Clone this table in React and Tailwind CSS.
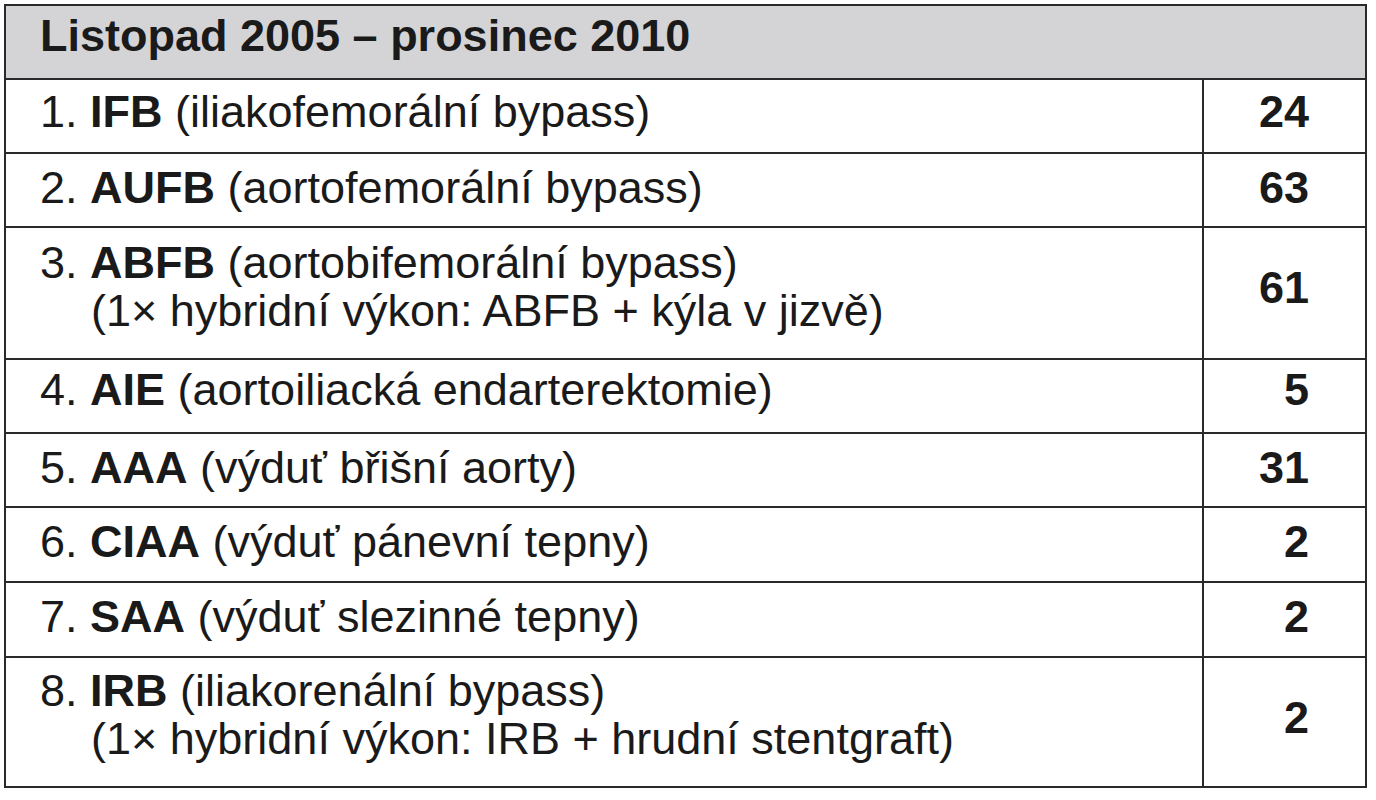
// Table of vascular procedures, Nov 2005 – Dec 2010
const rows = [
  { n: '1.', abbr: 'IFB', text: '(iliakofemorální bypass)', count: '24', h: 'h-[72px]', pt: 'pt-[8px]', npt: 'pt-[8px]' },
  { n: '2.', abbr: 'AUFB', text: '(aortofemorální bypass)', count: '63', h: 'h-[72px]', pt: 'pt-[10px]', npt: 'pt-[10px]' },
  {
    n: '3.', abbr: 'ABFB', text: '(aortobifemorální bypass)', extra: '(1× hybridní výkon: ABFB + kýla v jizvě)',
    count: '61', h: 'h-[130px]', pt: 'pt-[11px]', npt: 'pt-[36px]',
  },
  { n: '4.', abbr: 'AIE', text: '(aortoiliacká endarterektomie)', count: '5', h: 'h-[72px]', pt: 'pt-[6px]', npt: 'pt-[6px]' },
  { n: '5.', abbr: 'AAA', text: '(výduť břišní aorty)', count: '31', h: 'h-[72px]', pt: 'pt-[10px]', npt: 'pt-[10px]' },
  { n: '6.', abbr: 'CIAA', text: '(výduť pánevní tepny)', count: '2', h: 'h-[73px]', pt: 'pt-[10px]', npt: 'pt-[10px]' },
  { n: '7.', abbr: 'SAA', text: '(výduť slezinné tepny)', count: '2', h: 'h-[73px]', pt: 'pt-[10px]', npt: 'pt-[10px]' },
  {
    n: '8.', abbr: 'IRB', text: '(iliakorenální bypass)', extra: '(1× hybridní výkon: IRB + hrudní stentgraft)',
    count: '2', h: 'h-[128px]', pt: 'pt-[9px]', npt: 'pt-[36px]', last: true,
  },
];

export default function App() {
  return (
    <div className="min-h-[800px] bg-white pt-[4px] pl-[4px] font-['Liberation_Sans',Arial,sans-serif] text-[#1a1a1a]">
      <div className="w-[1363px] border-2 border-[#2a2a2a]">
        <div className="h-[74px] border-b-2 border-[#2a2a2a] bg-[#d4d4d6] pt-[6px] pl-[34px] text-[45px] leading-[48px] font-bold">
          Listopad 2005 – prosinec 2010
        </div>
        {rows.map((r) => (
          <div key={r.n} className={`flex ${r.last ? '' : 'border-b-2 border-[#2a2a2a]'}`}>
            <div className={`flex-1 ${r.h} ${r.pt} pl-[34px] text-[45px] leading-[48px] whitespace-nowrap`}>
              <div>
                {r.n} <span className="font-bold">{r.abbr}</span> {r.text}
              </div>
              {r.extra && <div className="pl-[51px]">{r.extra}</div>}
            </div>
            <div className={`w-[163px] border-l-2 border-[#2a2a2a] ${r.npt} pr-[56px] text-right text-[45px] leading-[48px] font-bold`}>
              {r.count}
            </div>
          </div>
        ))}
      </div>
    </div>
  );
}
